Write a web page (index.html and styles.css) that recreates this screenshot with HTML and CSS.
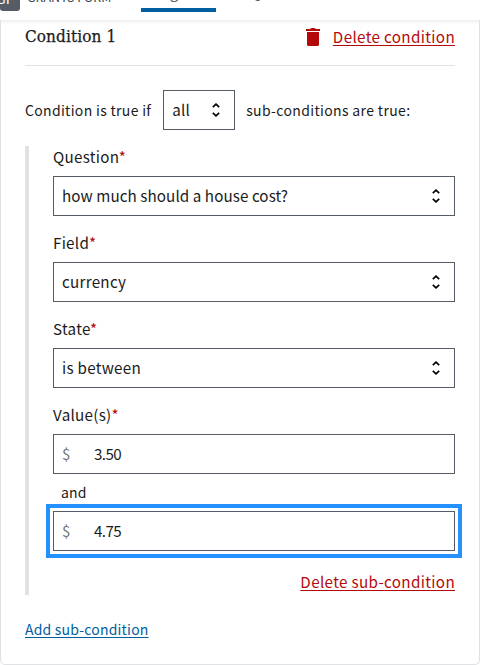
FILE: index.html
```html
<!DOCTYPE html>
<html lang="en">
<head>
<meta charset="utf-8">
<title>Conditions</title>
<link rel="stylesheet" href="styles.css">
</head>
<body>
<header class="nav">
  <span class="logo">GP</span>
  <span class="brand">GRANTS FORM</span>
  <span class="tab tab-active">Pages</span>
  <span class="tab-next">Q</span>
</header>
<main class="card">
  <div class="card-head">
    <h2 class="title">Condition 1</h2>
    <a class="danger"><svg class="trash" viewBox="0 0 14 18"><path d="M1 4h12v12.500q0 1.500-1.500 1.500h-9q-1.500 0-1.500-1.500zM0 1h4.300l1-1h3.400l1 1H14v2H0z"/></svg><span class="link">Delete condition</span></a>
  </div>
  <div class="rule">
    <span class="small s-if">Condition is true if</span>
    <div class="box mini"><span class="val">all</span><svg class="chev" viewBox="0 0 8 14"><path d="M.8 4.200 4 1.200l3.200 3M.8 9.800l3.200 3 3.200-3"/></svg></div>
    <span class="small s-sub">sub-conditions are true:</span>
  </div>
  <section class="sub">
    <label class="label">Question<b>*</b></label>
    <div class="box"><span class="val long">how much should a house cost?</span><svg class="chev" viewBox="0 0 8 14"><path d="M.8 4.200 4 1.200l3.200 3M.8 9.800l3.200 3 3.200-3"/></svg></div>
    <label class="label">Field<b>*</b></label>
    <div class="box"><span class="val">currency</span><svg class="chev" viewBox="0 0 8 14"><path d="M.8 4.200 4 1.200l3.200 3M.8 9.800l3.200 3 3.200-3"/></svg></div>
    <label class="label">State<b>*</b></label>
    <div class="box"><span class="val">is between</span><svg class="chev" viewBox="0 0 8 14"><path d="M.8 4.200 4 1.200l3.200 3M.8 9.800l3.200 3 3.200-3"/></svg></div>
    <label class="label">Value(s)<b>*</b></label>
    <div class="box"><span class="prefix">$</span><span class="val num">3.50</span></div>
    <div class="and small">and</div>
    <div class="box focus"><span class="prefix">$</span><span class="val num">4.75</span></div>
    <div class="sub-foot"><a class="link">Delete sub-condition</a></div>
  </section>
  <a class="add small">Add sub-condition</a>
</main>
</body>
</html>
```
FILE: styles.css
```css
* { box-sizing: border-box; }
body { margin: 0; height: 665px; overflow: hidden; background: #fff; color: #1b1b1b; font: 15.2px/22px "Noto Sans CJK SC", sans-serif; }
.nav { position: relative; z-index: 1; height: 20px; display: flex; align-items: flex-start; overflow: hidden; background: #fff; }
.card { position: relative; height: 645px; padding: 0 24px; border: 1px solid #dfe1e2; border-top: 0; border-radius: 0 0 5px 5px; background: linear-gradient(#0001, #0000 4px); }
.logo { flex: none; width: 20px; height: 31px; margin-top: -20px; padding-top: 7px; border-radius: 3px; background: #565c65; color: #fff; font-size: 14px; text-indent: -4px; }
.brand { flex: none; width: 86px; margin: -13.5px 0 0 7px; color: #3d4551; font-size: 12.5px; line-height: 20px; white-space: nowrap; }
.tab { flex: none; width: 75px; height: 32px; margin: -20px 0 0 28px; padding-right: 11px; border-bottom: 4px solid #005ea2; text-align: center; color: #565c65; }
.tab-next { margin: -20px 0 0 33px; color: #565c65; }
.card-head { height: 46px; display: flex; justify-content: space-between; border-bottom: 1px solid #dfe1e2; }
.title { margin: 4px 0 0; font: 400 17px/24px "DejaVu Serif", serif; font-stretch: condensed; letter-spacing: .1px; -webkit-text-stroke: .25px #1b1b1b; white-space: nowrap; }
.danger { display: flex; align-items: flex-start; padding-top: 5px; color: #b50909; }
.trash { width: 14px; height: 18px; margin: 3px 13px 0 0; fill: #b50909; }
.link { color: #b50909; letter-spacing: .35px; text-decoration: underline; text-underline-offset: 2px; text-decoration-skip-ink: none; }
.rule { display: flex; align-items: center; height: 40px; margin-top: 24px; white-space: nowrap; }
.small { font-size: 14px; }
.s-if { letter-spacing: .32px; }
.s-sub { letter-spacing: .35px; }
.box { display: flex; align-items: center; height: 40px; padding: 0 14px 0 8px; border: 1px solid #565c65; background: #fff; }
.val, .prefix { padding-bottom: 2px; }
.val { letter-spacing: .27px; }
.long { letter-spacing: .08px; }
.num { letter-spacing: -.6px; }
.mini { width: 72px; margin: 0 11px 0 12px; }
.chev { width: 8px; height: 14px; margin-left: auto; fill: none; stroke: #000; stroke-width: 1.7; }
.sub { height: 449px; margin-top: 16px; padding-left: 24px; border-left: 4px solid #dfe1e2; }
.label { display: block; height: 30px; line-height: 20px; letter-spacing: .28px; }
.box + .label { margin-top: 16px; }
.label b { color: #b50909; font-weight: 400; }
.prefix { width: 32px; color: #71767a; }
.and { height: 37px; padding: 7px 0 0 8px; letter-spacing: .2px; }
.focus { outline: 4px solid #2491ff; outline-offset: 3px; }
.sub-foot { margin-top: 19px; text-align: right; }
.add { display: inline-block; margin-top: 23px; color: #005ea2; letter-spacing: .2px; text-decoration: underline; text-underline-offset: 2px; }
```
